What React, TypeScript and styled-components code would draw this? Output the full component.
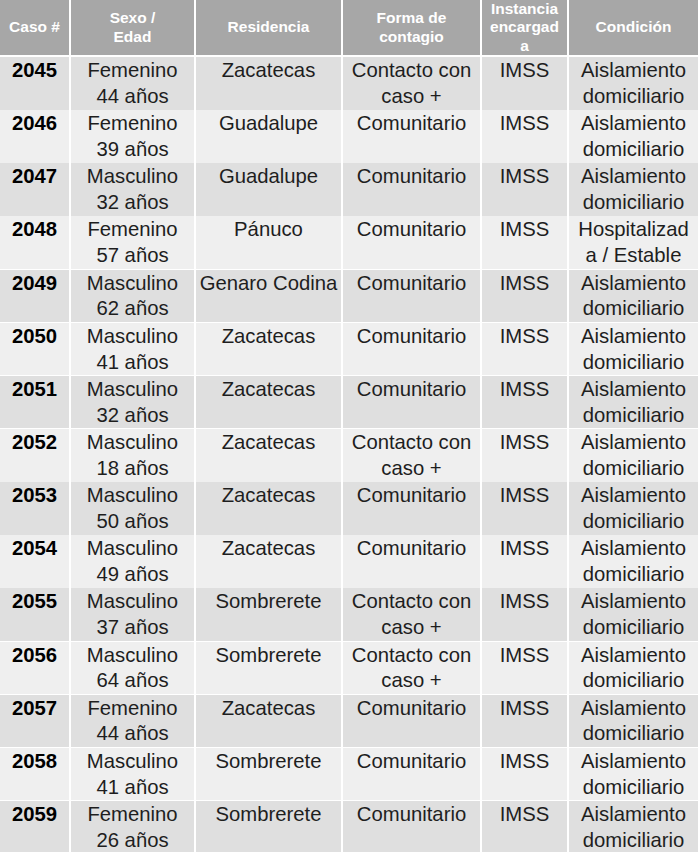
import styled, { createGlobalStyle } from "styled-components";

const GlobalStyle = createGlobalStyle`
  body {
    margin: 0;
    background: #ffffff;
    font-family: "Liberation Sans", Arial, sans-serif;
  }
`;

const Table = styled.div`
  width: 698px;
  display: flex;
  flex-direction: column;
  gap: 2px;
  background: #ffffff;
  overflow: hidden;
  height: 852px;
`;

const Row = styled.div<{ $header?: boolean }>`
  display: grid;
  grid-template-columns: 69px 123px 145px 137px 85px 129px;
  gap: 2px;
  height: ${(p) => (p.$header ? "55px" : "51.15px")};
  flex-shrink: 0;
`;

const HeadCell = styled.div`
  background: #a7a7a7;
  color: #ffffff;
  font-size: 15.5px;
  font-weight: 700;
  line-height: 18.5px;
  text-align: center;
  white-space: pre-line;
  display: flex;
  align-items: center;
  justify-content: center;
  overflow: hidden;
`;

const Cell = styled.div<{ $odd?: boolean; $bold?: boolean }>`
  background: ${(p) => (p.$odd ? "#dfdfdf" : "#efefef")};
  color: ${(p) => (p.$bold ? "#000000" : "#1e1e1e")};
  font-size: 20.3px;
  font-weight: ${(p) => (p.$bold ? 700 : 400)};
  line-height: 25.8px;
  padding-top: 1px;
  text-align: center;
  white-space: pre-line;
  overflow: visible;
`;

const headers = [
  "Caso #",
  "Sexo /\nEdad",
  "Residencia",
  "Forma de\ncontagio",
  "Instancia\nencargad\na",
  "Condición",
];

const AIS = "Aislamiento\ndomiciliario";
const CC = "Contacto con\ncaso +";

const rows: [string, string, string, string, string, string][] = [
  ["2045", "Femenino\n44 años", "Zacatecas", CC, "IMSS", AIS],
  ["2046", "Femenino\n39 años", "Guadalupe", "Comunitario", "IMSS", AIS],
  ["2047", "Masculino\n32 años", "Guadalupe", "Comunitario", "IMSS", AIS],
  ["2048", "Femenino\n57 años", "Pánuco", "Comunitario", "IMSS", "Hospitalizad\na / Estable"],
  ["2049", "Masculino\n62 años", "Genaro Codina", "Comunitario", "IMSS", AIS],
  ["2050", "Masculino\n41 años", "Zacatecas", "Comunitario", "IMSS", AIS],
  ["2051", "Masculino\n32 años", "Zacatecas", "Comunitario", "IMSS", AIS],
  ["2052", "Masculino\n18 años", "Zacatecas", CC, "IMSS", AIS],
  ["2053", "Masculino\n50 años", "Zacatecas", "Comunitario", "IMSS", AIS],
  ["2054", "Masculino\n49 años", "Zacatecas", "Comunitario", "IMSS", AIS],
  ["2055", "Masculino\n37 años", "Sombrerete", CC, "IMSS", AIS],
  ["2056", "Masculino\n64 años", "Sombrerete", CC, "IMSS", AIS],
  ["2057", "Femenino\n44 años", "Zacatecas", "Comunitario", "IMSS", AIS],
  ["2058", "Masculino\n41 años", "Sombrerete", "Comunitario", "IMSS", AIS],
  ["2059", "Femenino\n26 años", "Sombrerete", "Comunitario", "IMSS", AIS],
];

function App() {
  return (
    <>
      <GlobalStyle />
      <Table>
        <Row $header>
          {headers.map((h) => (
            <HeadCell key={h}>{h}</HeadCell>
          ))}
        </Row>
        {rows.map((r, i) => (
          <Row key={r[0]}>
            {r.map((c, j) => (
              <Cell key={j} $odd={i % 2 === 0} $bold={j === 0}>
                {c}
              </Cell>
            ))}
          </Row>
        ))}
      </Table>
    </>
  );
}

export default App;
